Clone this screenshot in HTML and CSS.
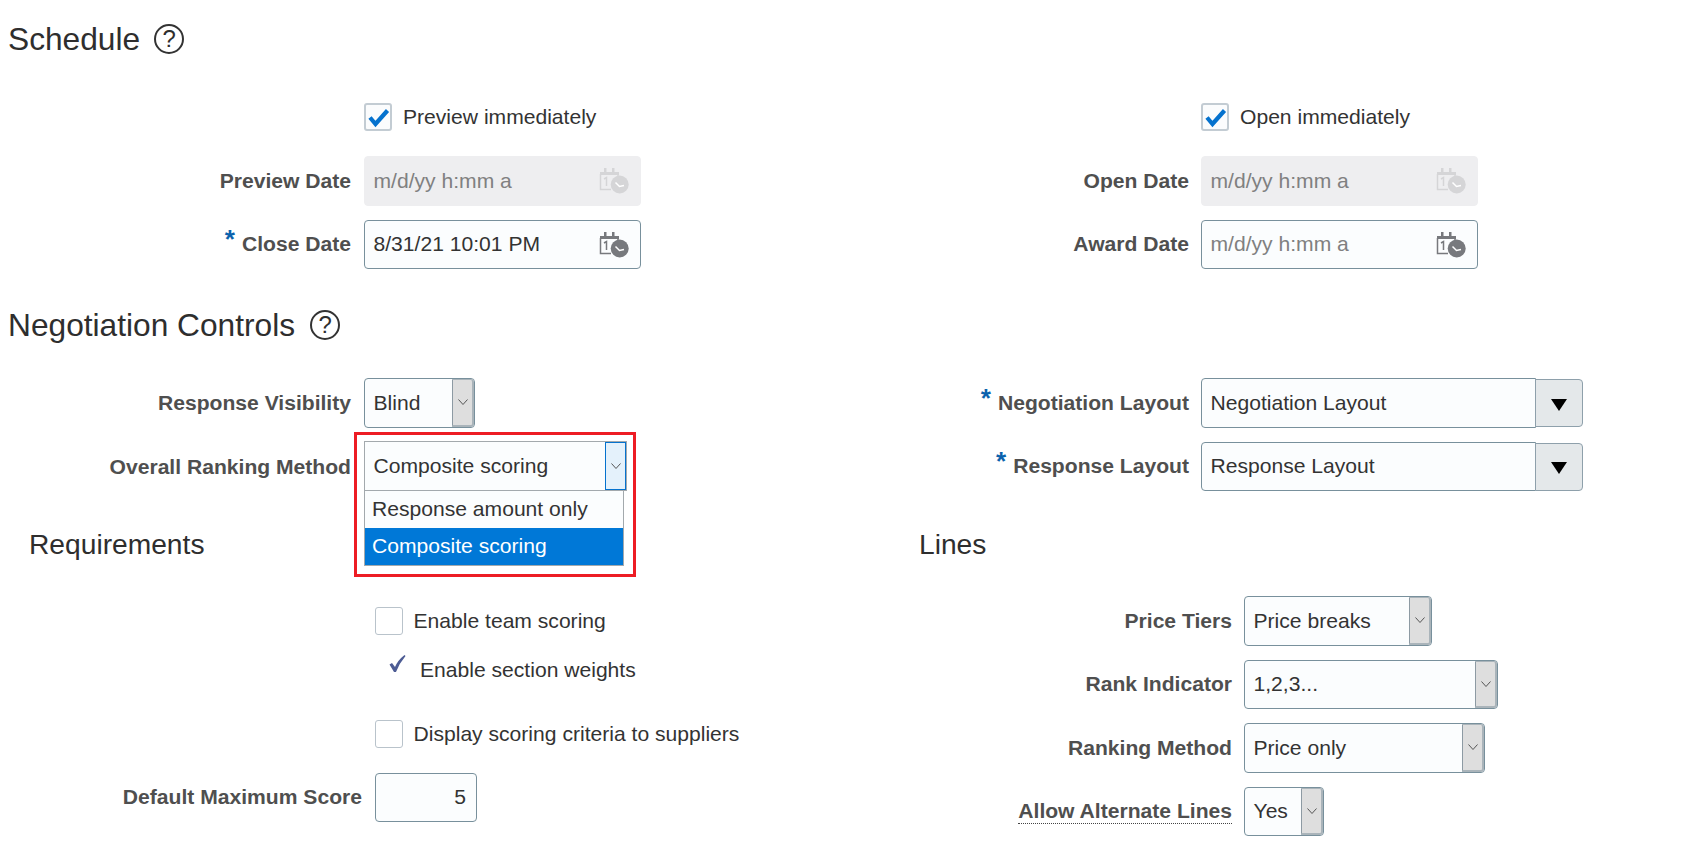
FILE: index.html
```html
<!DOCTYPE html>
<html>
<head>
    <meta charset="UTF-8">
    <title>Negotiation settings</title>
    <link rel="stylesheet" href="styles.css">
</head>
<body>
<svg class="defs" width="0" height="0">
    <symbol id="cal" viewBox="0 0 30 27">
        <path d="M1 5h19v3H1zM5 1h2.500v5H5zM13 1h2.500v5H13z" fill="currentColor"/>
        <path d="M1.500 7v15.500H12" fill="none" stroke="currentColor" stroke-width="1.500"/>
        <path d="M19 7v3" fill="none" stroke="currentColor" stroke-width="1.500"/>
        <path d="M5 12l2.500-1.500V19" fill="none" stroke="currentColor" stroke-width="1.500"/>
        <circle cx="20.700" cy="17.500" r="9" fill="currentColor"/>
        <path d="M16.500 15.500l4 4 4.500-1" fill="none" stroke="#fff" stroke-width="1.500"/>
    </symbol>
    <symbol id="chev" viewBox="0 0 10 6">
        <path d="M.5.500L5 5.500 9.500.500" fill="none" stroke="#555" stroke-width="1"/>
    </symbol>
    <symbol id="tick" viewBox="0 0 28 28">
        <path d="M6 14.500l5.500 6.500L23.500 7.500" fill="none" stroke="#0572ce" stroke-width="4.200"/>
    </symbol>
</svg>

<div id="wrap">
    <h2 class="title">Schedule <span class="help">?</span></h2>
    <div class="cols">
        <div class="col col-a">
            <div class="check-row first">
                <span class="check on"><svg><use href="#tick"/></svg></span>
                <span>Preview immediately</span>
            </div>
            <div class="row">
                <label class="lbl">Preview Date</label>
                <div class="input date off"><span>m/d/yy h:mm a</span><svg class="cal"><use href="#cal"/></svg></div>
            </div>
            <div class="row gap">
                <label class="lbl"><i>*</i>Close Date</label>
                <div class="input date"><span class="val">8/31/21 10:01 PM</span><svg class="cal"><use href="#cal"/></svg></div>
            </div>
        </div>
        <div class="col col-b">
            <div class="check-row first">
                <span class="check on"><svg><use href="#tick"/></svg></span>
                <span>Open immediately</span>
            </div>
            <div class="row">
                <label class="lbl">Open Date</label>
                <div class="input date off"><span>m/d/yy h:mm a</span><svg class="cal"><use href="#cal"/></svg></div>
            </div>
            <div class="row gap">
                <label class="lbl">Award Date</label>
                <div class="input date"><span>m/d/yy h:mm a</span><svg class="cal"><use href="#cal"/></svg></div>
            </div>
        </div>
    </div>

    <h2 class="title second">Negotiation Controls <span class="help">?</span></h2>
    <div class="cols controls">
        <div class="col col-a">
            <div class="row">
                <label class="lbl">Response Visibility</label>
                <div class="select w-blind"><span class="val">Blind</span><b class="trigger"><svg><use href="#chev"/></svg></b></div>
            </div>
            <div class="row gap">
                <label class="lbl low">Overall Ranking Method</label>
                <div class="select open w-overall">
                    <span class="val">Composite scoring</span><b class="trigger"><svg><use href="#chev"/></svg></b>
                    <div class="callout"></div>
                    <ul class="list">
                        <li>Response amount only</li>
                        <li class="sel">Composite scoring</li>
                    </ul>
                </div>
            </div>
        </div>
        <div class="col col-b">
            <div class="row">
                <label class="lbl"><i>*</i>Negotiation Layout</label>
                <div class="combo"><div class="input"><span class="val">Negotiation Layout</span></div><b class="drop"></b></div>
            </div>
            <div class="row gap">
                <label class="lbl"><i>*</i>Response Layout</label>
                <div class="combo"><div class="input"><span class="val">Response Layout</span></div><b class="drop"></b></div>
            </div>
        </div>
    </div>

    <div class="cols lower">
        <div class="col col-c">
            <h3 class="sub">Requirements</h3>
            <div class="check-row team">
                <span class="check"></span>
                <span>Enable team scoring</span>
            </div>
            <div class="check-row weights">
                <svg class="thin" viewBox="0 0 17 17"><path d="M.5 9.500L3 8l3 4Q9 5 15.500 0l1 1Q10.500 8 7 17H5z" fill="#4d5c94"/></svg>
                <span>Enable section weights</span>
            </div>
            <div class="check-row display">
                <span class="check"></span>
                <span>Display scoring criteria to suppliers</span>
            </div>
            <div class="row score">
                <label class="lbl">Default Maximum Score</label>
                <div class="input num"><span class="val">5</span></div>
            </div>
        </div>
        <div class="col col-d">
            <h3 class="sub">Lines</h3>
            <div class="row tiers">
                <label class="lbl">Price Tiers</label>
                <div class="select w-tiers"><span class="val">Price breaks</span><b class="trigger"><svg><use href="#chev"/></svg></b></div>
            </div>
            <div class="row gap">
                <label class="lbl">Rank Indicator</label>
                <div class="select w-rank"><span class="val">1,2,3...</span><b class="trigger"><svg><use href="#chev"/></svg></b></div>
            </div>
            <div class="row gap">
                <label class="lbl">Ranking Method</label>
                <div class="select w-method"><span class="val">Price only</span><b class="trigger"><svg><use href="#chev"/></svg></b></div>
            </div>
            <div class="row gap">
                <label class="lbl"><span class="dotted">Allow Alternate Lines</span></label>
                <div class="select w-alt"><span class="val">Yes</span><b class="trigger"><svg><use href="#chev"/></svg></b></div>
            </div>
        </div>
    </div>
</div>
</body>
</html>
```

FILE: styles.css
```css
* {
    margin: 0;
    padding: 0;
    box-sizing: border-box;
}

ul, ol, li {
    list-style: none;
}

html, body {
    height: 860px;
    overflow: hidden;
}

body {
    background-color: #fff;
    font-family: "Liberation Sans", Arial, sans-serif;
    font-size: 21.1px;
    color: #333;
}

.defs {
    position: absolute;
}

#wrap {
    width: 1685px;
    padding-top: 19px;
}

/* headings */
.title {
    display: flex;
    align-items: center;
    gap: 14px;
    height: 40px;
    padding-left: 8px;
    font-size: 31.7px;
    font-weight: normal;
    color: #2e2e2e;
}
.title.second {
    gap: 15px;
    margin-top: 36px;
}
.sub {
    height: 36px;
    line-height: 36px;
    font-size: 28.2px;
    font-weight: normal;
    color: #2e2e2e;
}
.help {
    width: 30px;
    height: 30px;
    border: 2px solid #333;
    border-radius: 50%;
    text-align: center;
    line-height: 26px;
    font-size: 24px;
}

/* columns */
.cols {
    display: flex;
    margin-top: 44px;
}
.cols.controls {
    margin-top: 33px;
}
.cols.lower {
    margin-top: 35px;
}
.col-a {
    width: 837px;
}
.col-c {
    width: 919px;
    padding-left: 29px;
}
.col-d {
    width: 766px;
}

/* rows */
.row {
    display: flex;
    align-items: center;
    gap: 13px;
    height: 49.5px;
}
.row.gap {
    margin-top: 14px;
}
.lbl {
    flex: none;
    width: 351px;
    text-align: right;
    font-weight: bold;
    color: #4f4f4f;
}
.lbl.low {
    padding-top: 1px;
}
.lbl i {
    margin-right: 8px;
    vertical-align: 3px;
    font-size: 26px;
    line-height: 14px;
    color: #0b62ad;
}
.col-b .row {
    gap: 12px;
}
.col-b .lbl {
    width: 352px;
}
.col-c .lbl {
    width: 333px;
}
.col-d .row {
    gap: 12px;
}
.col-d .lbl {
    width: 313px;
}
.dotted {
    display: inline-block;
    line-height: 25px;
    border-bottom: 1px dotted #444;
}

/* checkboxes */
.check-row {
    display: flex;
    align-items: center;
    gap: 11px;
    height: 28px;
    padding-left: 364px;
}
.check-row.first {
    margin-bottom: 25px;
}
.col-c .check-row {
    padding-left: 345.500px;
}
.check-row.team {
    margin-top: 45px;
}
.col-c .check-row.weights {
    margin-top: 21px;
    gap: 14px;
    padding-left: 360px;
}
.check-row.display {
    margin-top: 35.500px;
}
.row.score {
    margin-top: 25px;
}
.col-c .row.score {
    gap: 12.500px;
}
.row.tiers {
    margin-top: 34px;
}
.check {
    flex: none;
    width: 28px;
    height: 28px;
    border: 1px solid #b9c3cb;
    border-radius: 3px;
    background-color: #fff;
}
.check.on {
    border: 2px solid #c3ccd3;
    background-color: #fbfcfd;
}
.check svg {
    display: block;
    width: 28px;
    height: 28px;
    margin: -2px;
}
.thin {
    flex: none;
    width: 17px;
    height: 17px;
    margin-bottom: 14px;
}

/* inputs */
.input {
    display: flex;
    align-items: center;
    height: 100%;
    padding: 0 8.500px;
    border: 1px solid #78909c;
    border-radius: 4px;
    background-color: #fbfdfe;
    color: #808080;
}
.val {
    color: #333;
}
.date {
    justify-content: space-between;
    width: 277px;
    padding-right: 11px;
}
.date.off {
    border-color: #eeeef0;
    background-color: #eeeef0;
}
.cal {
    width: 30px;
    height: 27px;
    color: #77797d;
}
.off .cal {
    color: #d5d5d7;
}
.num {
    justify-content: flex-end;
    width: 102px;
    padding-right: 9.500px;
}

/* select boxes */
.select {
    position: relative;
    display: flex;
    align-items: center;
    justify-content: space-between;
    height: 100%;
    padding-left: 8.500px;
    border: 1px solid #78909c;
    border-radius: 4px;
    background-color: #fbfdfe;
}
.trigger {
    display: flex;
    align-items: center;
    justify-content: center;
    flex: none;
    width: 22px;
    height: 100%;
    border: 1px solid #aab4ba;
    border-width: 1px 2px 2px 1px;
    border-left-color: #8d9aa3;
    border-radius: 0 3px 3px 0;
    background-color: #dedede;
}
.trigger svg {
    width: 10px;
    height: 6px;
}
.w-blind {
    width: 111px;
}
.w-overall {
    width: 263px;
}
.w-tiers {
    width: 188px;
}
.w-rank {
    width: 254px;
}
.w-method {
    width: 241px;
}
.w-alt {
    width: 80px;
}

/* the open one */
.select.open {
    align-self: flex-start;
    height: 50.500px;
    margin-top: -1px;
    border-color: #a3a9ad;
    border-radius: 0;
}
.open .trigger {
    width: 21px;
    border: 1px solid #0572ce;
    border-radius: 0;
    background-color: #e4f1fb;
}
.list {
    position: absolute;
    left: -1px;
    right: 2px;
    top: 48.500px;
    height: 76px;
    border: 1px solid #a3a9ad;
    background-color: #fbfdfe;
}
.list li {
    height: 37px;
    padding-left: 7px;
    line-height: 36px;
}
.list .sel {
    background-color: #0078d7;
    color: #fff;
}
.callout {
    position: absolute;
    left: -11px;
    top: -10px;
    width: 282px;
    height: 145px;
    border: 3px solid #ed1c24;
}

/* combo with the big arrow */
.combo {
    display: flex;
    align-items: flex-start;
    height: 100%;
}
.combo .input {
    width: 335px;
    border-radius: 4px 0 0 4px;
}
.drop {
    display: flex;
    align-items: center;
    justify-content: center;
    width: 48px;
    height: 48px;
    margin: 1px 0 0 -1px;
    border: 1px solid #8ea0ab;
    border-radius: 0 4px 4px 0;
    background-color: #e4e8ea;
}
.drop::before {
    content: "";
    margin-top: 3px;
    border-style: solid;
    border-width: 12px 8px 0;
    border-color: #000 transparent transparent;
}
```
